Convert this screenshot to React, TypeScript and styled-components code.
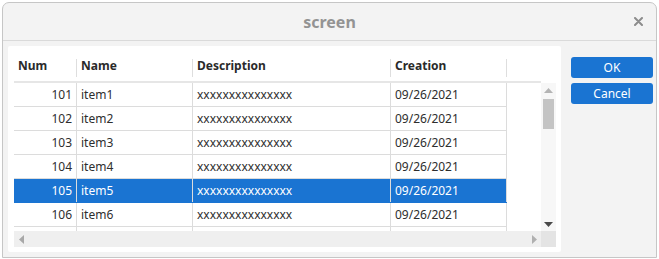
import React from 'react'
import styled, { createGlobalStyle } from 'styled-components'

const GlobalStyle = createGlobalStyle`
  html, body {
    margin: 0;
    padding: 0;
    background: #ffffff;
  }
  body {
    font-family: 'Noto Sans', 'Open Sans', sans-serif;
    font-size: 12px;
    color: #2e2e2e;
  }
`

const columns = '63px 116px 198px 116px'

const rows = [
  { num: 101, name: 'item1' },
  { num: 102, name: 'item2' },
  { num: 103, name: 'item3' },
  { num: 104, name: 'item4' },
  { num: 105, name: 'item5' },
  { num: 106, name: 'item6' },
]

const SELECTED = 105

const App = () => {
  return (
    <>
      <GlobalStyle />
      <Page>
        <Window>
          <TitleBar>
            <Title>screen</Title>
            <CloseButton aria-label='close'>
              <svg width='9' height='9' viewBox='0 0 9 9'>
                <path d='M1 1 L8 8 M8 1 L1 8' stroke='#8c8c8c' strokeWidth='2' strokeLinecap='round' />
              </svg>
            </CloseButton>
          </TitleBar>
          <Body>
            <Panel>
              <ScrollArea>
                <HeaderRow>
                  <HeaderCell>Num</HeaderCell>
                  <HeaderCell>Name</HeaderCell>
                  <HeaderCell>Description</HeaderCell>
                  <HeaderCell>Creation</HeaderCell>
                  <HeaderFill />
                </HeaderRow>
                <HeaderCorner />
                <Viewport>
                  {rows.map((r) => (
                    <Row key={r.num} $selected={r.num === SELECTED}>
                      <Cell $align='right'>{r.num}</Cell>
                      <Cell>{r.name}</Cell>
                      <Cell>xxxxxxxxxxxxxxx</Cell>
                      <Cell>09/26/2021</Cell>
                    </Row>
                  ))}
                  {/* next row, only its top few pixels show below the fold */}
                  <Row>
                    <Cell />
                    <Cell />
                    <Cell />
                    <Cell />
                  </Row>
                </Viewport>
                <VScroll>
                  <ArrowBox>
                    <svg width='9' height='5' viewBox='0 0 9 5'>
                      <path d='M0 5 L4.5 0 L9 5 Z' fill='#b4b4b4' />
                    </svg>
                  </ArrowBox>
                  <VTrack>
                    <VThumb />
                  </VTrack>
                  <ArrowBox>
                    <svg width='9' height='5' viewBox='0 0 9 5'>
                      <path d='M0 0 L9 0 L4.5 5 Z' fill='#4a4a4a' />
                    </svg>
                  </ArrowBox>
                </VScroll>
                <HScroll>
                  <HArrowBox>
                    <svg width='5' height='9' viewBox='0 0 5 9'>
                      <path d='M5 0 L5 9 L0 4.5 Z' fill='#a8a8a8' />
                    </svg>
                  </HArrowBox>
                  <HTrack />
                  <HArrowBox>
                    <svg width='5' height='9' viewBox='0 0 5 9'>
                      <path d='M0 0 L0 9 L5 4.5 Z' fill='#b0b0b0' />
                    </svg>
                  </HArrowBox>
                </HScroll>
                <Corner />
              </ScrollArea>
            </Panel>
            <ButtonColumn>
              <DialogButton>OK</DialogButton>
              <DialogButton>Cancel</DialogButton>
            </ButtonColumn>
          </Body>
        </Window>
      </Page>
    </>
  )
}

export default App

const Page = styled.div`
  width: 659px;
  height: 259px;
  padding: 2px 2px 1px 2px;
  box-sizing: border-box;
`

const Window = styled.div`
  width: 100%;
  height: 100%;
  box-sizing: border-box;
  border: 1px solid #c6c6c6;
  border-radius: 7px 7px 0 0;
  background: #f3f3f3;
  display: flex;
  flex-direction: column;
  overflow: hidden;
`

const TitleBar = styled.div`
  height: 37px;
  flex: none;
  border-bottom: 1px solid #dadada;
  display: flex;
  align-items: center;
  justify-content: center;
  position: relative;
`

const Title = styled.div`
  font-size: 16px;
  font-weight: bold;
  color: #939393;
  margin-top: 1px;
`

const CloseButton = styled.div`
  position: absolute;
  right: 13px;
  top: 14px;
  width: 9px;
  height: 9px;
  display: flex;
`

const Body = styled.div`
  flex: 1;
  display: flex;
  padding: 5px 3px 5px 5px;
  gap: 10px;
  min-height: 0;
`

const Panel = styled.div`
  width: 553px;
  background: #ffffff;
  border-radius: 2px;
  padding: 7px 5px 5px 6px;
  box-sizing: border-box;
`

const ScrollArea = styled.div`
  display: grid;
  grid-template-columns: 527px 15px;
  grid-template-rows: 30px 148px 16px;
  width: 542px;
`

const HeaderRow = styled.div`
  display: grid;
  grid-template-columns: ${columns} 1fr;
  border-bottom: 2px solid #e6e6e6;
  box-sizing: border-box;
`

const HeaderCell = styled.div`
  position: relative;
  font-weight: bold;
  padding-left: 4px;
  display: flex;
  align-items: center;
  padding-bottom: 3px;
  color: #2a2a2a;

  &::after {
    content: '';
    position: absolute;
    right: 0;
    top: 6px;
    bottom: 4px;
    width: 1px;
    background: #dedede;
  }
`

const HeaderFill = styled.div``

const HeaderCorner = styled.div`
  background: #ffffff;
`

const Viewport = styled.div`
  overflow: hidden;
`

const Row = styled.div<{ $selected?: boolean }>`
  display: grid;
  grid-template-columns: ${columns};
  height: 24px;
  box-sizing: border-box;
  border-bottom: 1px solid ${(p) => (p.$selected ? '#1a74d2' : '#dcdcdc')};
  background: ${(p) => (p.$selected ? '#1a74d2' : 'transparent')};
  color: ${(p) => (p.$selected ? '#ffffff' : '#2e2e2e')};
  width: 493px;
`

const Cell = styled.div<{ $align?: 'left' | 'right' }>`
  border-right: 1px solid #dcdcdc;
  display: flex;
  align-items: center;
  justify-content: ${(p) => (p.$align === 'right' ? 'flex-end' : 'flex-start')};
  padding: 0 4px;
  white-space: nowrap;
  overflow: hidden;
`

const VScroll = styled.div`
  background: #f7f7f7;
  display: flex;
  flex-direction: column;
`

const ArrowBox = styled.div`
  height: 14px;
  display: flex;
  align-items: center;
  justify-content: center;
  flex: none;
`

const VTrack = styled.div`
  flex: 1;
  padding: 2px 1px;
`

const VThumb = styled.div`
  height: 30px;
  background: #c4c4c4;
  margin: 0 1px;
`

const HScroll = styled.div`
  background: #efefef;
  display: flex;
`

const HArrowBox = styled.div`
  width: 14px;
  display: flex;
  align-items: center;
  justify-content: center;
  flex: none;
`

const HTrack = styled.div`
  flex: 1;
`

const Corner = styled.div`
  background: #e4e4e4;
`

const ButtonColumn = styled.div`
  display: flex;
  flex-direction: column;
  gap: 5px;
  padding-top: 11px;
`

const DialogButton = styled.div`
  width: 82px;
  height: 21px;
  border-radius: 3px;
  background: #1a74d2;
  color: #ffffff;
  display: flex;
  align-items: center;
  justify-content: center;
  font-size: 12px;
`
